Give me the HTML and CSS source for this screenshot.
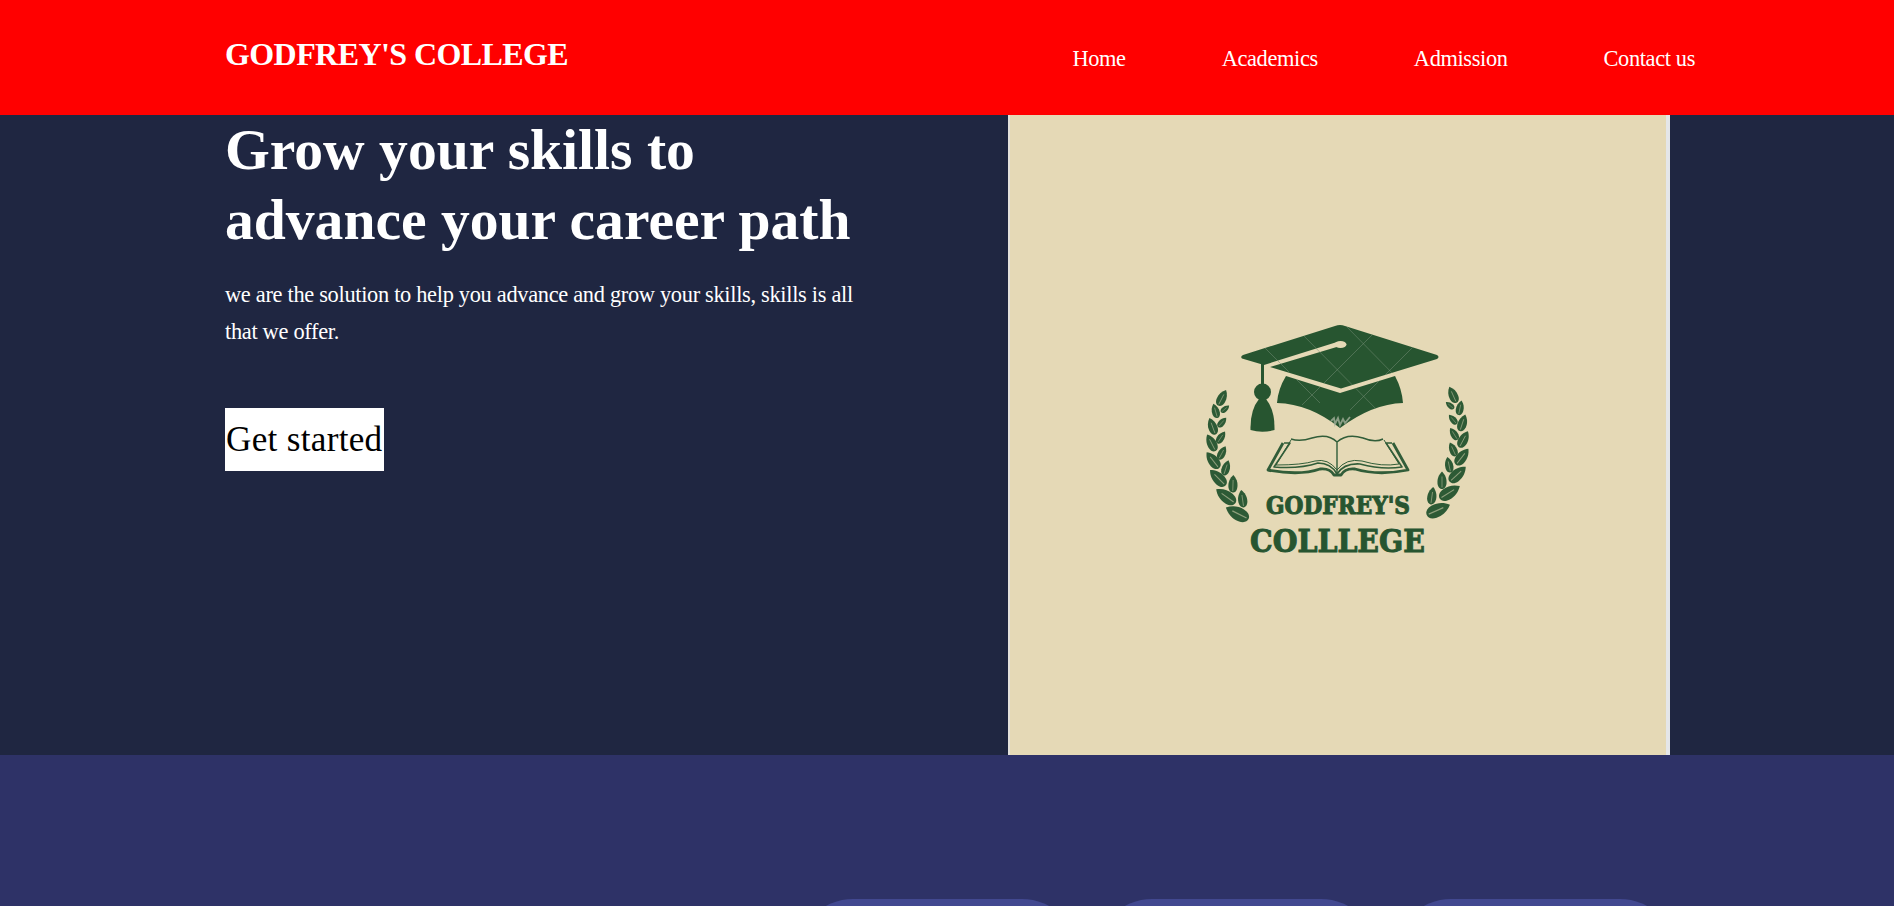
FILE: index.html
```html
<!DOCTYPE html>
<html lang="en">
<head>
<meta charset="utf-8">
<title>Godfrey's College</title>
<link rel="stylesheet" href="styles.css">
</head>
<body>
<nav class="navbar">
  <div class="container nav-container">
    <h4 class="brand">GODFREY'S COLLEGE</h4>
    <ul class="menu">
      <li><a>Home</a></li>
      <li><a>Academics</a></li>
      <li><a>Admission</a></li>
      <li><a>Contact us</a></li>
    </ul>
  </div>
</nav>
<header class="hero">
  <div class="container hero-container">
    <div class="hero-left">
      <h1>Grow your skills to advance your career path</h1>
      <p>we are the solution to help you advance and grow your skills, skills is all that we offer.</p>
      <a class="btn">Get started</a>
    </div>
    <div class="hero-right">
      <svg class="logo" viewBox="1190 310 300 260" width="300" height="260">
        <defs>
          <g id="leaf">
            <path d="M0-9C3-6 5-2 4.500 3C4 7 2 8.500 0 8.500C-2 8.500-4 7-4.500 3C-5-2-3-6 0-9Z"/>
            <path d="M0-4V7" fill="none" stroke="#a9b18f" stroke-width=".8" stroke-opacity=".8"/>
          </g>
          <clipPath id="capclip"><path d="M1241 358Q1240 356 1243 355L1337 326Q1340 324.500 1344 326L1437 355Q1440 357 1437 359L1341 388.500L1270 366L1262 365Z M1286 376L1340 393L1395 376Q1403 389 1403 403Q1372 404 1340 428Q1310 404 1277 403Q1278 389 1286 376Z"/></clipPath>
        </defs>
        <g fill="#275530">
          <path d="M1242 358.500Q1240 356.500 1243 355L1335 326Q1340 324 1345 326L1437 355Q1440 357 1437 359L1341 388.500L1270 367L1340 346L1337 342L1264 365Z"/>
          <path d="M1286 376L1340 393L1395 376Q1402 389 1403 403Q1372 404 1340 428Q1310 404 1277 403Q1278 389 1286 376Z"/>
          <path d="M1261 363h3v22h-3z"/>
          <circle cx="1262.500" cy="392" r="8.500"/>
          <path d="M1259 399h7Q1275 410 1274.500 430Q1262 433.500 1250.500 430Q1250 410 1259 399Z"/>
        </g>
        <ellipse cx="1340.500" cy="344.500" rx="6" ry="3.500" fill="#e5d9b6"/>
        <g clip-path="url(#capclip)" fill="none" stroke="#789078" stroke-opacity=".5" stroke-width="1">
          <path d="M1264 347L1320 403M1300 332L1385 418M1345 325L1400 381M1375 332L1302 405M1417 343L1350 410"/>
        </g>
        <path d="M1331 421l3-3 1 6 3-6 2 7 3-6 2 4 5-6" fill="none" stroke="#a4b09b" stroke-width="1.800" stroke-opacity=".8"/>
        <g fill="none" stroke="#315d39" stroke-linejoin="round">
          <path d="M1283 443L1268 470Q1300 476 1320 469Q1330 468 1334 475H1341Q1345 468 1355 469Q1378 476 1408 470L1393 443" stroke-width="2.800"/>
          <path d="M1284 443h6L1274 467Q1300 469 1318 463Q1331 463 1337 474Q1344 463 1360 464Q1382 470 1402 467L1386 443h6" stroke-width="1.600"/>
          <path d="M1291 440L1276 465Q1302 465 1315 461Q1328 458 1337 470Q1346 458 1362 461Q1382 467 1399 464L1384 440" stroke-width="1"/>
          <path d="M1291 439Q1300 442 1312 438Q1328 433 1337 442V474M1337 442Q1347 433 1363 438Q1375 443 1383 439" stroke-width="1.400"/>
        </g>
        <g fill="#2d5a35">
          <use href="#leaf" transform="translate(1222 398) rotate(27)"/>
          <use href="#leaf" transform="translate(1215.500 411) rotate(-16) scale(.85)"/>
          <use href="#leaf" transform="translate(1225 409) rotate(50) scale(.6)"/>
          <use href="#leaf" transform="translate(1212.500 426.500) rotate(-20)"/>
          <use href="#leaf" transform="translate(1222 422.500) rotate(42) scale(.7)"/>
          <use href="#leaf" transform="translate(1211.500 443) rotate(-27) scale(1.050)"/>
          <use href="#leaf" transform="translate(1221 437.500) rotate(34) scale(.8)"/>
          <use href="#leaf" transform="translate(1213 460.500) rotate(-38) scale(1.150)"/>
          <use href="#leaf" transform="translate(1222 453) rotate(28) scale(.85)"/>
          <use href="#leaf" transform="translate(1218 478) rotate(-45) scale(1.250)"/>
          <use href="#leaf" transform="translate(1226 468) rotate(18) scale(.9)"/>
          <use href="#leaf" transform="translate(1226 496.500) rotate(-54) scale(1.350)"/>
          <use href="#leaf" transform="translate(1233 484) rotate(2)"/>
          <use href="#leaf" transform="translate(1237.500 513.500) rotate(-63) scale(1.450)"/>
          <use href="#leaf" transform="translate(1242.500 499) rotate(-8)"/>
          <use href="#leaf" transform="translate(1453 395) rotate(-24)"/>
          <use href="#leaf" transform="translate(1460 408) rotate(12) scale(.85)"/>
          <use href="#leaf" transform="translate(1450 405.500) rotate(-50) scale(.6)"/>
          <use href="#leaf" transform="translate(1462.500 423) rotate(18)"/>
          <use href="#leaf" transform="translate(1453 419.500) rotate(-40) scale(.7)"/>
          <use href="#leaf" transform="translate(1463.500 439.500) rotate(28) scale(1.050)"/>
          <use href="#leaf" transform="translate(1454 434) rotate(-32) scale(.8)"/>
          <use href="#leaf" transform="translate(1462 457) rotate(38) scale(1.150)"/>
          <use href="#leaf" transform="translate(1453 449.500) rotate(-24) scale(.85)"/>
          <use href="#leaf" transform="translate(1457.500 474.500) rotate(47) scale(1.250)"/>
          <use href="#leaf" transform="translate(1449 465) rotate(-12) scale(.9)"/>
          <use href="#leaf" transform="translate(1449.500 492.500) rotate(58) scale(1.350)"/>
          <use href="#leaf" transform="translate(1442 480.500)"/>
          <use href="#leaf" transform="translate(1438 510) rotate(66) scale(1.450)"/>
          <use href="#leaf" transform="translate(1432 496) rotate(8)"/>
        </g>
        <g class="logo-text">
          <text x="1266" y="513.500" font-size="23.500" textLength="144" lengthAdjust="spacingAndGlyphs">GODFREY'S</text>
          <text x="1250" y="552" font-size="31.500" textLength="175" lengthAdjust="spacingAndGlyphs">COLLLEGE</text>
        </g>
      </svg>
    </div>
  </div>
</header>
<section class="categories">
  <div class="container cards">
    <article class="card"></article>
    <article class="card"></article>
    <article class="card"></article>
  </div>
</section>
</body>
</html>
```
FILE: styles.css
```css
* { margin: 0; padding: 0; box-sizing: border-box; }
body {
  height: 906px;
  overflow: hidden;
  background: #2e3267;
  color: #fff;
  font-family: "Liberation Serif", "Times New Roman", serif;
}
.container { width: 1470px; margin-left: 225px; }
.navbar { height: 115px; background: #f00; }
.nav-container { display: flex; justify-content: space-between; }
.brand { padding-top: 36px; font-size: 32px; line-height: 37px; letter-spacing: -.58px; }
.menu { display: flex; gap: 96px; padding-top: 46px; list-style: none; font-size: 22.400px; line-height: 26px; letter-spacing: -.37px; }
.hero { height: 640px; background: #1f2641; }
.hero-container { display: flex; }
.hero-left { width: 783px; }
.hero-left h1 { width: 640px; font-size: 57.600px; line-height: 70px; }
.hero-left p { width: 640px; margin-top: 21px; font-size: 22.400px; line-height: 37px; letter-spacing: -.31px; }
.btn { display: inline-block; width: 159px; margin-top: 58px; padding-left: 1px; background: #fff; color: #000; font-size: 35.200px; line-height: 63px; letter-spacing: .28px; white-space: nowrap; }
.hero-right {
  width: 662px;
  height: 640px;
  padding: 195px 0 0 180px;
  background: #e5d9b6;
  border-left: 2px solid #e4e2dc;
  border-right: 4px solid #e4e6e9;
}
.logo { display: block; }
.logo-text { fill: #275530; stroke: #275530; stroke-width: 1px; font-family: "DejaVu Serif", serif; font-weight: bold; }
.categories { height: 151px; padding-top: 144px; overflow: hidden; }
.cards { display: flex; gap: 18px; padding-left: 572px; }
.card { flex: none; width: 281px; height: 260px; border-radius: 56px; background: #424890; }
```
